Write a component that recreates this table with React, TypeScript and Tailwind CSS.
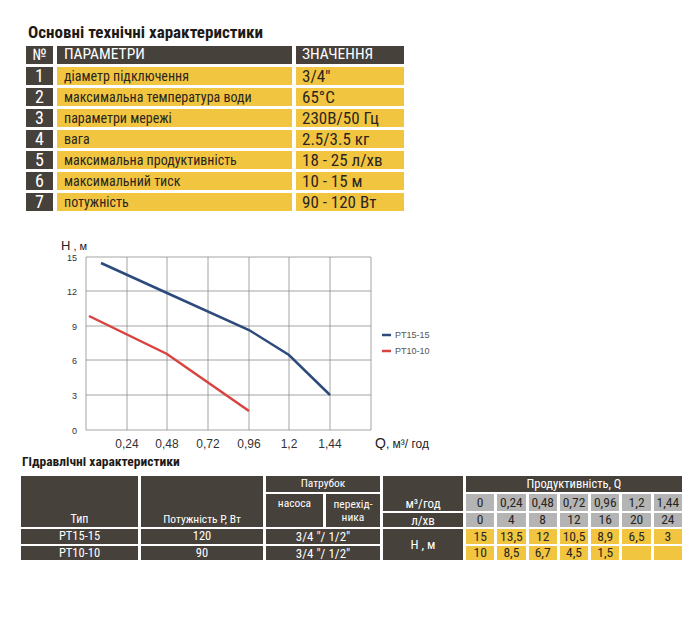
import React from 'react';

const params = [
  ['1', 'діаметр підключення', '3/4"'],
  ['2', 'максимальна температура води', '65°C'],
  ['3', 'параметри мережі', '230В/50 Гц'],
  ['4', 'вага', '2.5/3.5 кг'],
  ['5', 'максимальна продуктивність', '18 - 25 л/хв'],
  ['6', 'максимальний тиск', '10 - 15 м'],
  ['7', 'потужність', '90 - 120 Вт'],
];

const m3 = ['0', '0,24', '0,48', '0,72', '0,96', '1,2', '1,44'];
const lmin = ['0', '4', '8', '12', '16', '20', '24'];
const h15 = ['15', '13,5', '12', '10,5', '8,9', '6,5', '3'];
const h10 = ['10', '8,5', '6,7', '4,5', '1,5', '', ''];

// full class names so tailwind picks them up
const colStart = ['col-start-6', 'col-start-7', 'col-start-8', 'col-start-9', 'col-start-10', 'col-start-11', 'col-start-12'];

function Chart() {
  const xs = [46, 87, 127, 168, 209, 249, 290, 331];
  const ys = [22, 56, 91, 125, 160, 195];
  const yLabels = ['15', '12', '9', '6', '3', '0'];
  const xLabels = ['0,24', '0,48', '0,72', '0,96', '1,2', '1,44'];
  return (
    <svg width="420" height="215" className="block ml-[40px] font-['Liberation_Sans',Arial,sans-serif]">
      {xs.map((x) => (
        <line key={'v' + x} x1={x} y1={22} x2={x} y2={195} stroke="#8e8e8e" strokeWidth="0.8" />
      ))}
      {ys.map((y) => (
        <line key={'h' + y} x1={46} y1={y} x2={331} y2={y} stroke="#8e8e8e" strokeWidth="0.8" />
      ))}
      {ys.map((y, i) => (
        <text key={'yl' + y} x={37} y={y + 4} fontSize="9" fill="#333" textAnchor="end">
          {yLabels[i]}
        </text>
      ))}
      {xLabels.map((l, i) => (
        <text key={'xl' + l} x={xs[i + 1]} y={213} fontSize="12" fill="#333" textAnchor="middle">
          {l}
        </text>
      ))}
      <text x={21} y={15} fill="#222">
        <tspan fontSize="13">H</tspan>
        <tspan fontSize="11"> , м</tspan>
      </text>
      <text x={335} y={213} fill="#222">
        <tspan fontSize="14">Q</tspan>
        <tspan fontSize="12">, м³/ год</tspan>
      </text>
      <polyline points="61,28 127,58 209,95 249,120 290,160" fill="none" stroke="#2c4a7c" strokeWidth="2.5" />
      <polyline points="49,81 127,119 209,176" fill="none" stroke="#d8423f" strokeWidth="2.5" />
      <line x1={342} y1={100} x2={351} y2={100} stroke="#2c4a7c" strokeWidth="2.5" />
      <text x={355} y={103} fontSize="9" fill="#555">PT15-15</text>
      <line x1={342} y1={116} x2={351} y2={116} stroke="#d8423f" strokeWidth="2.5" />
      <text x={355} y={119} fontSize="9" fill="#555">PT10-10</text>
    </svg>
  );
}

function HydraulicTable() {
  const dark = 'bg-[#47413b] text-white flex justify-center';
  const gray = 'bg-[#b4b4b4] text-[#2a2520] text-[13.5px] flex items-center justify-center';
  const yellow = 'bg-[#f2c541] text-[#2a2520] text-[13.5px] flex items-center justify-center';
  return (
    <div className="ml-[21px] w-[661px] grid grid-cols-[117px_122px_57px_54px_80px_repeat(7,1fr)] grid-rows-[16px_17px_14px_15px_14px] gap-x-[3px] gap-y-[2px] text-[11.5px] leading-none">
      <div className={`${dark} col-start-1 row-start-1 row-span-3 items-end pb-[2px] text-[12px]`}>Тип</div>
      <div className={`${dark} col-start-2 row-start-1 row-span-3 items-end pb-[2px]`}>Потужність Р, Вт</div>
      <div className={`${dark} col-start-3 col-span-2 row-start-1 items-center`}>Патрубок</div>
      <div className={`${dark} col-start-3 row-start-2 row-span-2 items-start pt-[4px]`}>насоса</div>
      <div className={`${dark} col-start-4 row-start-2 row-span-2 items-start pt-[4px] text-center leading-[13px]`}>
        перехід-
        <br />
        ника
      </div>
      <div className={`${dark} col-start-5 row-start-1 row-span-2 items-end pb-[1px] text-[13px]`}>м³/год</div>
      <div className={`${dark} col-start-5 row-start-3 items-center text-[13px]`}>л/хв</div>
      <div className={`${dark} col-start-6 col-span-7 row-start-1 items-center text-[12.5px]`}>Продуктивність, Q</div>
      {m3.map((v, i) => (
        <div key={'m' + i} className={`${gray} ${colStart[i]} row-start-2`}>
          {v}
        </div>
      ))}
      {lmin.map((v, i) => (
        <div key={'l' + i} className={`${gray} ${colStart[i]} row-start-3`}>
          {v}
        </div>
      ))}
      <div className={`${dark} col-start-1 row-start-4 items-center text-[12.5px]`}>PT15-15</div>
      <div className={`${dark} col-start-2 row-start-4 items-center text-[12.5px]`}>120</div>
      <div className={`${dark} col-start-3 col-span-2 row-start-4 items-center text-[13px]`}>3/4 "/ 1/2"</div>
      <div className={`${dark} col-start-1 row-start-5 items-center text-[12.5px]`}>PT10-10</div>
      <div className={`${dark} col-start-2 row-start-5 items-center text-[12.5px]`}>90</div>
      <div className={`${dark} col-start-3 col-span-2 row-start-5 items-center text-[13px]`}>3/4 "/ 1/2"</div>
      <div className={`${dark} col-start-5 row-start-4 row-span-2 items-center text-[13px]`}>Н , м</div>
      {h15.map((v, i) => (
        <div key={'a' + i} className={`${yellow} ${colStart[i]} row-start-4`}>
          {v}
        </div>
      ))}
      {h10.map((v, i) => (
        <div key={'b' + i} className={`${yellow} ${colStart[i]} row-start-5`}>
          {v}
        </div>
      ))}
    </div>
  );
}

export default function App() {
  return (
    <div className="w-[700px] h-[617px] bg-white font-['Roboto_Condensed','Liberation_Sans',sans-serif]">
      <h1 className="pl-[28px] pt-[22px] text-[17px] font-bold text-[#1e1a17] leading-[20px]">
        Основні технічні характеристики
      </h1>
      <div className="ml-[26px] mt-[4px] grid grid-cols-[27px_235px_108px] auto-rows-[18px] gap-x-[4px] gap-y-[3px] leading-none">
        <div className="bg-[#47413b] text-white text-[16px] flex items-center justify-center">№</div>
        <div className="bg-[#47413b] text-white text-[15.5px] flex items-center pl-[7px]">ПАРАМЕТРИ</div>
        <div className="bg-[#47413b] text-white text-[15.5px] flex items-center pl-[6px]">ЗНАЧЕННЯ</div>
        {params.map(([n, p, v]) => (
          <React.Fragment key={n}>
            <div className="bg-[#47413b] text-white text-[18px] flex items-center justify-center">{n}</div>
            <div className="bg-[#f2c541] text-[#2a2520] text-[14px] flex items-center pl-[7px]">{p}</div>
            <div className="bg-[#f2c541] text-[#2a2520] text-[17px] flex items-center pl-[6px]">{v}</div>
          </React.Fragment>
        ))}
      </div>
      <div className="mt-[24px]">
        <Chart />
      </div>
      <h2 className="pl-[22px] mt-[3px] text-[13.5px] font-bold text-[#1e1a17] leading-[16px]">
        Гідравлічні характеристики
      </h2>
      <div className="mt-[7px]">
        <HydraulicTable />
      </div>
    </div>
  );
}
